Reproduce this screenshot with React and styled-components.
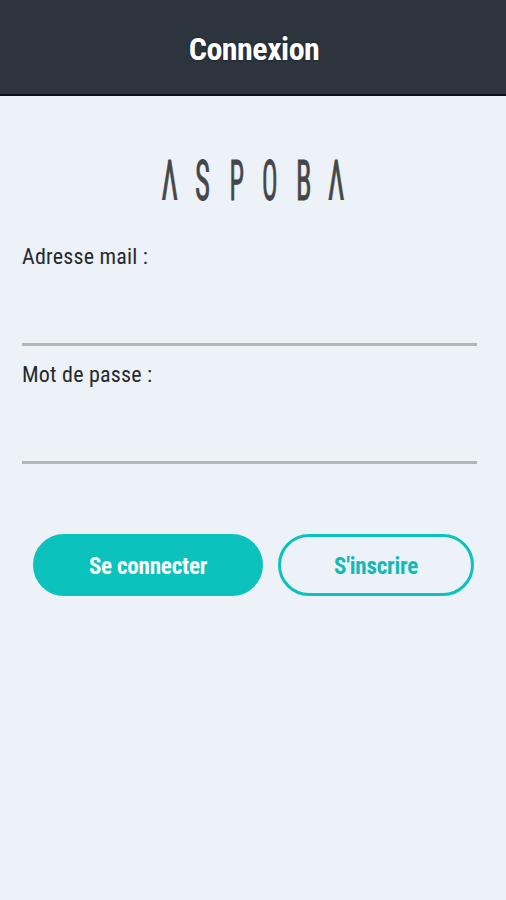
import styled, { createGlobalStyle } from "styled-components";

const GlobalStyle = createGlobalStyle`
    * {
        box-sizing: border-box;
    }
    body {
        margin: 0;
        background: #edf1f8;
        font-family: "Roboto Condensed", Roboto, "Liberation Sans", sans-serif;
        font-stretch: condensed;
    }
`;

const Screen = styled.div`
    display: flex;
    flex-direction: column;
    height: 900px;
    background: #edf1f8;
`;

const Header = styled.header`
    display: flex;
    align-items: center;
    justify-content: center;
    height: 96px;
    padding: 4px 0 0 2px;
    background: #2c343e;
    border-bottom: 2px solid #0b1019;
`;

const Title = styled.h1`
    margin: 0;
    color: #fff;
    font-size: 32px;
    line-height: 36px;
    font-weight: 700;
    letter-spacing: -0.5px;
    text-shadow: 0 0 2px #10161e;
`;

const Logo = styled.svg`
    display: block;
    width: 260px;
    height: 80px;
    margin: 44px auto 0;
    fill: #454648;
    stroke: #454648;
    stroke-width: 0.9px;
    font-family: Roboto, sans-serif;
    font-size: 55px;
    font-weight: 400;
`;

const Form = styled.form`
    display: flex;
    flex-direction: column;
    padding: 23px 29px 0 22px;
`;

const Field = styled.label`
    display: flex;
    flex-direction: column;
    height: 118px;
`;

const Label = styled.span`
    color: #26292e;
    font-size: 22px;
    line-height: 28px;
    letter-spacing: 0.2px;
`;

const Input = styled.input`
    height: 75px;
    padding: 0;
    border: 0;
    border-bottom: 3px solid #b2b5b9;
    background: transparent;
    font: inherit;
    outline: none;
`;

const Actions = styled.div`
    display: flex;
    gap: 15px;
    margin: 55px 0 0 11px;
`;

const Button = styled.button`
    width: ${(props) => props.$width};
    height: 62px;
    padding: 2px 0 0;
    border: 3px solid #0bc2bd;
    border-radius: 31px;
    background: ${(props) => (props.$filled ? "#0bc2bd" : "transparent")};
    color: ${(props) => (props.$filled ? "#fff" : "#13bab5")};
    font-family: inherit;
    font-stretch: inherit;
    font-size: 23px;
    font-weight: 700;
    letter-spacing: -0.2px;
`;

const letters = [
    { char: "Λ", x: 38.5, width: 16.5 },
    { char: "S", x: 72, width: 15 },
    { char: "P", x: 106.5, width: 14.5 },
    { char: "O", x: 139, width: 15.5 },
    { char: "B", x: 173, width: 15.5 },
    { char: "Λ", x: 205, width: 16.5 },
];

const Brand = () => (
    <Logo viewBox="0 0 260 80" role="img" aria-label="ASPOBA">
        {letters.map(({ char, x, width }) => (
            <text key={x} x={x} y="60.2" textLength={width} lengthAdjust="spacingAndGlyphs">
                {char}
            </text>
        ))}
    </Logo>
);

const App = () => {
    return (
        <>
            <GlobalStyle />
            <Screen>
                <Header>
                    <Title>Connexion</Title>
                </Header>
                <Brand />
                <Form>
                    <Field>
                        <Label>Adresse mail :</Label>
                        <Input type="email" />
                    </Field>
                    <Field>
                        <Label>Mot de passe :</Label>
                        <Input type="password" />
                    </Field>
                    <Actions>
                        <Button type="submit" $filled $width="230px">Se connecter</Button>
                        <Button type="button" $width="196px">S'inscrire</Button>
                    </Actions>
                </Form>
            </Screen>
        </>
    );
};

export default App;
